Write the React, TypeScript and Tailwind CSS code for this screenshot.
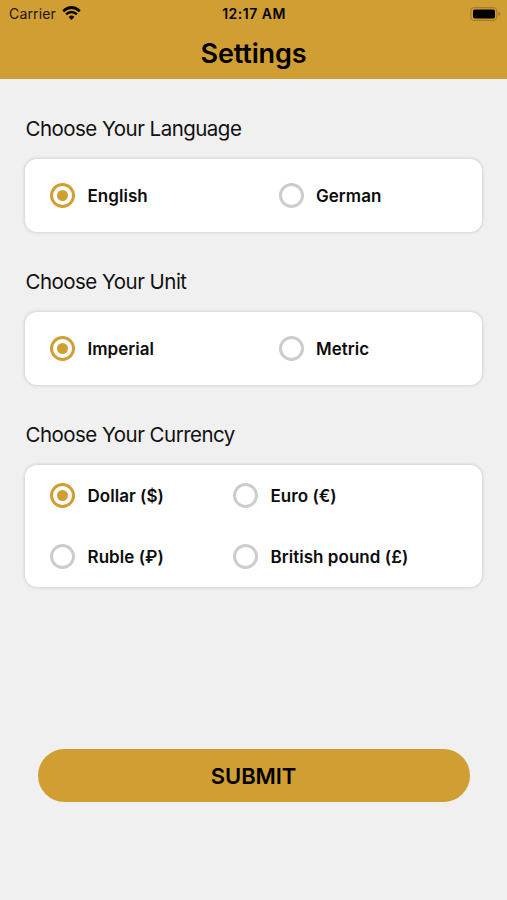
import React from "react";

type Option = { label: string; selected?: boolean };

function Radio({ selected }: { selected?: boolean }) {
  return (
    <span
      className={
        selected
          ? "flex size-[25px] shrink-0 items-center justify-center rounded-full border-[3px] border-[#d09e33]"
          : "flex size-[25px] shrink-0 items-center justify-center rounded-full border-[3px] border-[#cccccc]"
      }
    >
      {selected && <span className="size-[11px] rounded-full bg-[#d09e33]" />}
    </span>
  );
}

function Section({
  title,
  options,
  columns,
}: {
  title: string;
  options: Option[];
  columns: string;
}) {
  return (
    <section className="mb-[36px]">
      <h2 className="mb-[15px] h-[30px] pl-[0.5px] text-[20.5px] leading-[30px] tracking-[-0.53px] text-[#111]">
        {title}
      </h2>
      <div
        className={`grid rounded-xl bg-white pl-[25px] shadow-[0_0_3px_1px_rgba(0,0,0,0.12)] ${columns}`}
      >
        {options.map((option) => (
          <div key={option.label} className="flex items-center">
            <Radio selected={option.selected} />
            <span className="ml-[12.5px] whitespace-nowrap text-[17px] font-semibold leading-6 tracking-[0.04px] text-[#0c0c0c]">
              {option.label}
            </span>
          </div>
        ))}
      </div>
    </section>
  );
}

export default function App() {
  return (
    <div className="flex h-[900px] w-[507px] flex-col overflow-hidden bg-[#f0f0f0] font-['Inter','Liberation_Sans',sans-serif] text-black">
      <header className="h-[79px] shrink-0 bg-[#d09e33]">
        <div className="grid h-[27px] grid-cols-3 items-center pl-[9px] pr-[6px]">
          <div className="flex items-center gap-[6px] text-[14px] tracking-[0.15px] text-[#1c1503]">
            <span>Carrier</span>
            <svg width="19" height="15" viewBox="0 0 19 15" fill="none">
              <path d="M1.2 5.2Q9.5 -2.2 17.8 5.2" stroke="#080600" strokeWidth="2.7" />
              <path d="M4.1 8.3Q9.5 3.7 14.9 8.3" stroke="#080600" strokeWidth="2.5" />
              <path d="M6.6 11Q9.5 8.2 12.4 11L9.5 14Z" fill="#080600" />
            </svg>
          </div>
          <div className="-ml-[2px] whitespace-nowrap text-center text-[14px] font-semibold tracking-[0.5px]">12:17 AM</div>
          <svg className="justify-self-end" width="31" height="14" viewBox="0 0 31 14" fill="none">
            <rect x="0.8" y="0.6" width="26" height="12.8" rx="3.6" stroke="#a67e28" strokeWidth="1.2" />
            <rect x="3" y="2.4" width="22" height="9.2" rx="1.8" fill="#000" />
            <path d="M28.3 4.7Q30.6 5.3 30.6 7T28.3 9.3Z" fill="#a67e28" />
          </svg>
        </div>
        <h1 className="h-[52px] text-center text-[27px] font-semibold leading-[53px] tracking-[-0.15px]">
          Settings
        </h1>
      </header>
      <main className="flex flex-col px-[25px] pt-[35px]">
        <Section
          title="Choose Your Language"
          columns="h-[73px] grid-cols-[228.5px_1fr]"
          options={[{ label: "English", selected: true }, { label: "German" }]}
        />
        <div className="-mt-px">
          <Section
            title="Choose Your Unit"
            columns="h-[73px] grid-cols-[228.5px_1fr]"
            options={[{ label: "Imperial", selected: true }, { label: "Metric" }]}
          />
        </div>
        <div className="-mt-px">
          <Section
            title="Choose Your Currency"
            columns="h-[122px] grid-cols-[183px_1fr] grid-rows-2"
            options={[
              { label: "Dollar ($)", selected: true },
              { label: "Euro (€)" },
              { label: "Ruble (₽)" },
              { label: "British pound (£)" },
            ]}
          />
        </div>
        <button className="mx-[12.5px] mt-[126px] h-[53px] rounded-full bg-[#d09e33] text-[22px] font-semibold leading-[54px] tracking-[-0.1px]">
          SUBMIT
        </button>
      </main>
    </div>
  );
}
